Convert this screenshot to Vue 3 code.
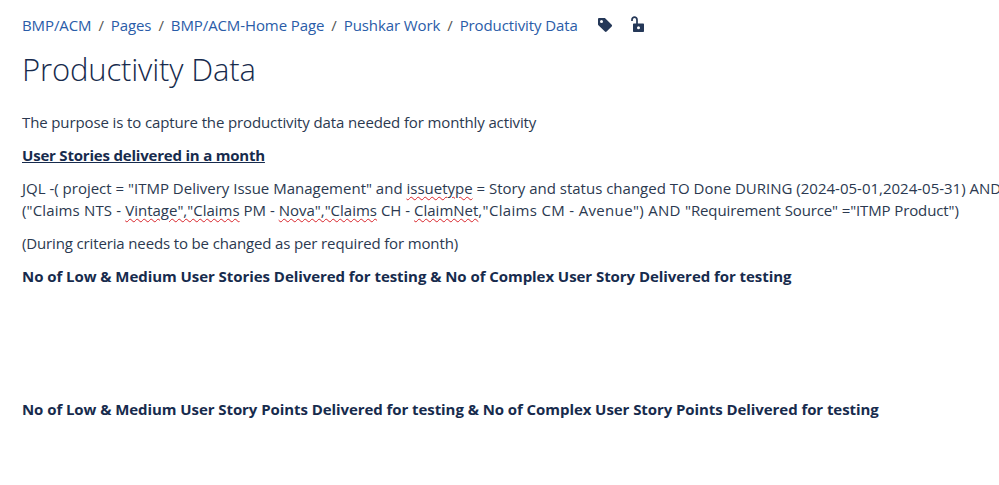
<script setup>
const crumbs = ['BMP/ACM', 'Pages', 'BMP/ACM-Home Page', 'Pushkar Work', 'Productivity Data']
</script>

<template>
  <div class="page">
    <nav class="crumbs">
      <template v-for="(c, i) in crumbs" :key="c">
        <span v-if="i" class="sep">/</span>
        <a class="link">{{ c }}</a>
      </template>
      <svg class="ic tag" width="16" height="16" viewBox="0 0 16 16">
        <path fill="#253858" fill-rule="evenodd" d="M1 2.2C1 1.5 1.5 1 2.2 1h5.2c.4 0 .7.1 1 .4l6.300 6.300c.5.5.5 1.200 0 1.700l-5.100 5.100c-.5.5-1.200.5-1.700 0L1.400 8.200C1.100 7.900 1 7.600 1 7.200V2.200zM4.500 6a1.500 1.500 0 1 0 0-3 1.500 1.500 0 0 0 0 3z"/>
      </svg>
      <svg class="ic lock" width="16" height="18" viewBox="0 0 16 18">
        <path fill="none" stroke="#253858" stroke-width="1.700" d="M2 5V3.700a2.500 2.500 0 0 1 5 0V8"/>
        <path fill="#253858" fill-rule="evenodd" d="M4 7.500h9c.6 0 1 .4 1 1V15c0 .6-.4 1-1 1H4c-.6 0-1-.4-1-1V8.500c0-.6.4-1 1-1zM8.500 13.300a1.500 1.500 0 1 0 0-3 1.500 1.500 0 0 0 0 3z"/>
      </svg>
    </nav>
    <h1 class="title">Productivity Data</h1>
    <p class="p1">The purpose is to capture the productivity data needed for monthly activity</p>
    <p class="p2"><strong class="u">User Stories delivered in a month</strong></p>
    <p class="jql">JQL -( project = "ITMP Delivery Issue Management" and <span class="sq">issuetype</span> = Story and status changed TO Done DURING (2024-05-01,2024-05-31) AND<br><span class="lead">("Claims NTS - </span><span class="sq">Vintage","Claims</span> PM - <span class="sq">Nova","Claims</span> CH - <span class="sq">ClaimNet</span><span class="wide">,"Claims CM - Avenue") AND </span><span class="tight">"Requirement Source" ="ITMP Product")</span></p>
    <p class="p4">(During criteria needs to be changed as per required for month)</p>
    <p class="p5"><strong>No of Low &amp; Medium User Stories Delivered for testing &amp; No of Complex User Story Delivered for testing</strong></p>
    <p class="p6"><strong>No of Low &amp; Medium User Story Points Delivered for testing &amp; No of Complex User Story Points Delivered for testing</strong></p>
  </div>
</template>

<style scoped>
.page {
  width: 999px;
  height: 485px;
  overflow: hidden;
  box-sizing: border-box;
  padding: 14px 0 0 22px;
  background: #fff;
  color: #172b4d;
  font-family: "Open Sans", "Noto Sans", sans-serif;
  font-size: 15px;
  line-height: 22px;
  white-space: nowrap;
}
.crumbs {
  display: flex;
  align-items: center;
  height: 22px;
  font-size: 15px;
  letter-spacing: -0.1px;
}
.link { color: #2a5ca8; }
.sep { margin: 0 7px; color: #555; }
.ic { display: block; flex: none; }
.tag { margin-left: 19px; }
.lock { margin-left: 17px; }
.title {
  margin: 10px 0 0;
  font-size: 31px;
  font-weight: 300;
  line-height: 46px;
  letter-spacing: -0.15px;
  color: #172b4d;
}
p { margin: 0; }
.p1 { margin-top: 19px; color: #2b3950; letter-spacing: -0.12px; }
.p2 { margin-top: 11px; letter-spacing: -0.2px; }
strong { font-weight: 700; color: #172b4d; }
.u { text-decoration: underline; }
.jql { margin-top: 11px; color: #2b3950; }
.lead { letter-spacing: 0.14px; }
.wide { letter-spacing: 0.33px; }
.tight { letter-spacing: -0.12px; }
.sq { text-decoration: underline wavy #d8232a 1px; text-underline-offset: 2px; }
.p4 { margin-top: 11px; color: #2b3950; letter-spacing: -0.14px; }
.p5 { margin-top: 11px; letter-spacing: -0.055px; }
.p6 { margin-top: 111px; letter-spacing: -0.07px; }
</style>
